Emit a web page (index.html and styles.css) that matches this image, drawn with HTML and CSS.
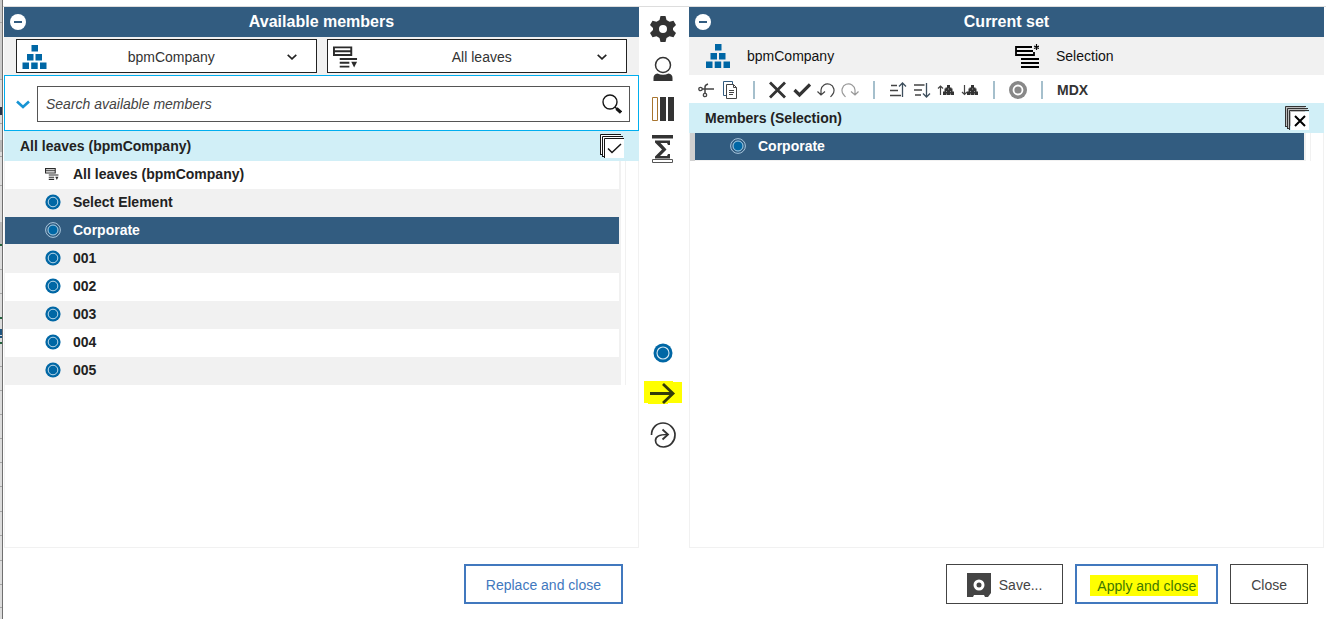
FILE: index.html
```html
<!DOCTYPE html>
<html lang="en">
<head>
    <meta charset="UTF-8">
    <meta name="viewport" content="width=device-width, initial-scale=1.0">
    <title>Set Editor</title>
    <link rel="stylesheet" href="styles.css">
</head>
<body>
    <!-- Shared icons -->
    <svg class="icon-defs" aria-hidden="true">
        <symbol id="icon-hierarchy" viewBox="0 0 24 24">
            <path fill="#0067a5" d="M9 0h6.500v6.500H9zM4.500 9H11v6.500H4.500zM13 9h6.500v6.500H13zM0 17.500h6.500V24H0zM8.700 17.500h6.500V24H8.700zM17.500 17.500H24V24h-6.500z"/>
        </symbol>
        <symbol id="icon-leaf" viewBox="0 0 20 20">
            <circle cx="10" cy="10" r="9.500" fill="#0067a5"/>
            <circle cx="10" cy="10" r="6" fill="none" stroke="#d5e8f3" stroke-width="1.100"/>
        </symbol>
        <symbol id="icon-leaf-selected" viewBox="0 0 16 16">
            <circle cx="8" cy="8" r="7.400" fill="none" stroke="#a9c6dc" stroke-width="1"/>
            <circle cx="8" cy="8" r="5.400" fill="#0067a5"/>
            <circle cx="8" cy="8" r="5" fill="none" stroke="#c3daea" stroke-width="0.900"/>
        </symbol>
        <symbol id="icon-subset" viewBox="0 0 26 24">
            <path fill="none" stroke="#2b2b2b" stroke-width="2" d="M1 2h18v8H1zM1 6h18M7 14h18M7 18h10M7 22h10"/>
            <path fill="#2b2b2b" d="M19 17h6l-3 6z"/>
        </symbol>
        <symbol id="icon-minus" viewBox="0 0 16 16">
            <circle cx="8" cy="8" r="8" fill="#fff"/>
            <path stroke="#325c80" stroke-width="2" d="M4 8h8"/>
        </symbol>
        <symbol id="icon-chevron" viewBox="0 0 10 6">
            <path fill="none" stroke="currentColor" stroke-width="1.600" d="M.7.8L5 4.800 9.300.8"/>
        </symbol>
        <symbol id="icon-pyramid" viewBox="0 0 11 10">
            <path fill="#333" d="M4 0h3v2.500h1.500v1h1v3H11V10H7.700V8.500h-.5V10H3.800V8.500h-.5V10H0V6.500h1.500v-3h1v-1H4z"/>
            <path fill="#999" d="M5 3.500h1v1H5zM3 6h1v1H3zM7 6h1v1H7z"/>
        </symbol>
    </svg>

    <!-- Worksheet edge behind the editor -->
    <svg class="sheet-edge" aria-hidden="true">
        <rect width="2" height="100%" fill="#dcdcdc"/>
        <path fill="#cbcbcb" d="M0 0h2v80H0z"/>
        <path fill="#b9b9b9" d="M0 222h2v23H0zM0 140h2v12H0z"/>
        <path stroke="#a6a6a6" d="M0 22.500h2M0 79.500h2M0 123.500h2M0 156.500h2M0 185.500h2M0 269.500h2M0 293.500h2M0 366.500h2M0 390.500h2M0 414.500h2M0 438.500h2M0 462.500h2M0 486.500h2M0 511.500h2M0 535.500h2M0 560.500h2M0 584.500h2M0 607.500h2"/>
        <path fill="#22633c" d="M0 244h3v2H0zM0 317h3v2H0zM0 342h3v2H0z"/>
        <path fill="#27364a" d="M0 107h2v8H0z"/>
        <path fill="#1f5580" d="M0 329h2v6H0zM0 336h3v2H0z"/>
        <path stroke="#707070" d="M2.500 0v2000"/>
    </svg>

    <main class="editor">
        <section class="panel">
            <header class="panel-title">
                <button class="collapse" aria-label="Collapse available members"><svg><use href="#icon-minus"/></svg></button>
                <h2>Available members</h2>
            </header>
            <div class="pickers">
                <div class="picker">
                    <svg class="picker-icon"><use href="#icon-hierarchy"/></svg>
                    <select aria-label="Hierarchy"><option>bpmCompany</option></select>
                    <svg class="picker-arrow"><use href="#icon-chevron"/></svg>
                </div>
                <div class="picker">
                    <svg class="picker-icon"><use href="#icon-subset"/></svg>
                    <select aria-label="Set"><option>All leaves</option></select>
                    <svg class="picker-arrow"><use href="#icon-chevron"/></svg>
                </div>
            </div>
            <div class="search">
                <button class="search-toggle" aria-label="Search options"><svg viewBox="0 0 14 9"><path fill="none" stroke="#1794d4" stroke-width="2.600" d="M1 1.500l6 5.500 6-5.500"/></svg></button>
                <div class="search-box">
                    <input type="text" placeholder="Search available members" aria-label="Search available members">
                    <button class="search-go" aria-label="Search">
                        <svg viewBox="0 0 20 20"><circle cx="8" cy="8" r="7" fill="none" stroke="#161616" stroke-width="1.400"/><path stroke="#161616" stroke-width="1.500" d="M13 13l2 2"/><path stroke="#161616" stroke-width="3.200" d="M14.500 14.500l4.500 4"/></svg>
                    </button>
                </div>
            </div>
            <div class="list-head">
                <h3>All leaves (bpmCompany)</h3>
                <button class="stack" aria-label="Select all">
                    <svg viewBox="0 0 24 24"><path fill="#fff" stroke="#161616" d="M.5 21V.5H21M2.500 23V2.500H23"/><path fill="none" stroke="#161616" d="M.5 20.500h2M2.500 22.500h2M4.500 24V4.500H24"/><path fill="#fff" d="M5 5h19v19H5z"/><path fill="none" stroke="#161616" stroke-width="1.500" d="M8 14.500l4 4 9-8.500"/></svg>
                </button>
            </div>
            <div class="list">
                <ul class="members">
                    <li><svg class="set-icon"><use href="#icon-subset"/></svg>All leaves (bpmCompany)</li>
                    <li><svg><use href="#icon-leaf"/></svg>Select Element</li>
                    <li class="selected"><svg><use href="#icon-leaf-selected"/></svg>Corporate</li>
                    <li><svg><use href="#icon-leaf"/></svg>001</li>
                    <li><svg><use href="#icon-leaf"/></svg>002</li>
                    <li><svg><use href="#icon-leaf"/></svg>003</li>
                    <li><svg><use href="#icon-leaf"/></svg>004</li>
                    <li><svg><use href="#icon-leaf"/></svg>005</li>
                </ul>
            </div>
        </section>

        <nav class="tools">
            <button aria-label="Settings">
                <svg viewBox="0 0 26 26"><path fill="#333" fill-rule="evenodd" d="M10.500 0h5l1 4 3 1.700 4-1 2.500 4.300-3 3v2l3 3-2.500 4.300-4-1-3 1.700-1 4h-5l-1-4-3-1.700-4 1L0 17l3-3v-2L0 9l2.500-4.300 4 1L9.500 4zM13 9a4 4 0 1 0 0 8 4 4 0 0 0 0-8z"/></svg>
            </button>
            <button aria-label="Aliases">
                <svg viewBox="0 0 26 26"><circle cx="13" cy="9" r="7.500" fill="none" stroke="#333" stroke-width="1.500"/><path fill="#333" d="M3.500 25v-3q0-4 4-4.500 5.500 2.500 11 0 4 .5 4 4.500v3z"/></svg>
            </button>
            <button aria-label="Attributes">
                <svg viewBox="0 0 26 26"><path fill="none" stroke="#a8752f" d="M2.500 1.500h5v23h-5z"/><path fill="#333" d="M10 1h6v24h-6zM18 1h6v24h-6z"/></svg>
            </button>
            <button aria-label="Totals">
                <svg class="totals" viewBox="0 0 26 28"><path fill="#333" d="M2 0h21v3.500H2zM5 5.500h15v4.500h-2l-1-2h-6.500l6 6.500-6.500 6.500H17l1-2h2v4.500H5v-2l7-7-7-7z"/><path fill="#fff" stroke="#555" d="M2.500 24.500h20v3h-20z"/></svg>
            </button>
            <div class="tools-move">
                <button aria-label="Leaf members"><svg class="leaf"><use href="#icon-leaf"/></svg></button>
                <button aria-label="Add to set">
                    <svg class="marked" viewBox="0 0 38 24"><path fill="#ff0" d="M0 0h29v1h9v21H24v1H4v-1H0z"/><path fill="none" stroke="#333b0a" stroke-width="2.800" d="M6 12.500h23M19 3l10 9.500L19 22"/></svg>
                </button>
                <button class="replace" aria-label="Replace set">
                    <svg viewBox="0 0 26 26"><path fill="none" stroke="#333" stroke-width="1.700" d="M1.500 13C1.500 6 6.500 1 13 1s12 5.500 12 12-5 12-11.500 12C8 25 5.500 21.500 5.500 18.500c0-4 4-6 11.500-6"/><path fill="none" stroke="#333" stroke-width="1.800" d="M12.500 7.500l5.500 5-5.500 5"/></svg>
                </button>
            </div>
        </nav>

        <section class="panel">
            <header class="panel-title">
                <button class="collapse" aria-label="Collapse current set"><svg><use href="#icon-minus"/></svg></button>
                <h2>Current set</h2>
            </header>
            <div class="set-info">
                <div><svg><use href="#icon-hierarchy"/></svg>bpmCompany</div>
                <div>
                    <svg viewBox="0 0 24 24"><path fill="none" stroke="#000" stroke-width="1.800" d="M17 3H1v8h18V8M1 7h17M6 15h18M6 19h18M6 23h18"/><path fill="none" stroke="#000" stroke-width="1.200" d="M21.500 0v6M19 2l5 2.500M24 2l-5 2.500"/></svg>Selection
                </div>
            </div>
            <div class="toolbar">
                <button aria-label="Cut"><svg viewBox="0 0 18 18"><path fill="none" stroke="#444" stroke-width="1.500" d="M5 8h12M8 13V6q0-2 3-3"/><circle cx="3.500" cy="8" r="1.700" fill="none" stroke="#444" stroke-width="1.300"/><circle cx="8" cy="14" r="1.700" fill="none" stroke="#444" stroke-width="1.300"/></svg></button>
                <button aria-label="Copy"><svg viewBox="0 0 18 18"><path fill="none" stroke="#325c80" d="M5 14.500H2.500V.5h9V3"/><path fill="#fff" stroke="#444" d="M5.500 3.500h7l3 3v11h-10z"/><path fill="none" stroke="#444" d="M12.500 3.500v3h3M8 9.500h5M8 11.500h5M8 13.500h4"/></svg></button>
                <span class="divider"></span>
                <button aria-label="Remove"><svg viewBox="0 0 18 18"><path stroke="#333" stroke-width="2.800" d="M1 1.500l15 15M16 1.500L1 16.500"/></svg></button>
                <button aria-label="Keep"><svg viewBox="0 0 18 18"><path fill="none" stroke="#333" stroke-width="3.200" d="M1.500 9l5 5L17 3.500"/></svg></button>
                <button aria-label="Undo"><svg viewBox="0 0 18 18"><path fill="none" stroke="#444" stroke-width="1.200" d="M4 14V9a6.500 6.500 0 1 1 11.500 4.500L13.500 16M.5 10.500L4 14l4-3.500"/></svg></button>
                <button aria-label="Redo"><svg viewBox="0 0 18 18"><path fill="none" stroke="#999" stroke-width="1.200" d="M14 14V9A6.500 6.500 0 1 0 2.500 13.500L4.500 16M10 10.500l4 3.500 3.500-3.500"/></svg></button>
                <span class="divider"></span>
                <button aria-label="Sort ascending"><svg viewBox="0 0 18 18"><path fill="none" stroke="#444" stroke-width="1.500" d="M2 4.500h6M1 9.500h8M1 14.500h11"/><path fill="none" stroke="#3d4e5c" stroke-width="1.300" d="M13.500 16V2M10 5.500L13.500 2 17 5.500"/></svg></button>
                <button aria-label="Sort descending"><svg viewBox="0 0 18 18"><path fill="none" stroke="#444" stroke-width="1.500" d="M1 4h10.500M1 9h8M2 14h6"/><path fill="none" stroke="#3d4e5c" stroke-width="1.300" d="M13.500 2v14M10 12.500l3.500 3.500 3.500-3.500"/></svg></button>
                <button aria-label="Sort hierarchy ascending"><svg viewBox="0 0 18 18"><path fill="none" stroke="#444" stroke-width="1.200" d="M3.500 14V5M1 7.500L3.500 5 6 7.500"/><use href="#icon-pyramid" x="6" y="4" width="11" height="10"/></svg></button>
                <button aria-label="Sort hierarchy descending"><svg viewBox="0 0 18 18"><path fill="none" stroke="#444" stroke-width="1.200" d="M3.500 4v9.500M1 11l2.500 2.500L6 11"/><use href="#icon-pyramid" x="6" y="4" width="11" height="10"/></svg></button>
                <span class="divider"></span>
                <button aria-label="Show totals"><svg viewBox="0 0 18 18"><circle cx="9" cy="9" r="9" fill="#888"/><circle cx="9" cy="9" r="4.500" fill="none" stroke="#fff" stroke-width="1.800"/></svg></button>
                <span class="divider"></span>
                <button class="mdx">MDX</button>
            </div>
            <div class="list-head">
                <h3>Members (Selection)</h3>
                <button class="stack" aria-label="Remove all">
                    <svg viewBox="0 0 24 24"><path fill="#bbb" stroke="#333" d="M.5 21V.5H21M2.500 23V2.500H23"/><path fill="none" stroke="#333" d="M.5 20.500h2M2.500 22.500h2M4.500 24V4.500H24"/><path fill="#fff" d="M6 6h18v18H6z"/><path fill="none" stroke="#000" stroke-width="2" d="M10 10l10 10M20 10L10 20"/></svg>
                </button>
            </div>
            <div class="list">
                <ul class="members current">
                    <li class="selected"><svg><use href="#icon-leaf-selected"/></svg>Corporate</li>
                </ul>
            </div>
        </section>

        <footer class="actions actions-left">
            <button class="btn btn-primary">Replace and close</button>
        </footer>
        <footer class="actions actions-right">
            <button class="btn">
                <svg viewBox="0 0 24 24"><path fill="#444" d="M0 0h24v20l-3 4h-3l-1-2H7l-1 2H0z"/><circle cx="12" cy="12" r="4" fill="#444" stroke="#fff" stroke-width="3"/></svg>Save...
            </button>
            <button class="btn btn-primary"><span class="marked-text">Apply and close</span></button>
            <button class="btn">Close</button>
        </footer>
    </main>
</body>
</html>
```

FILE: styles.css
```css
* {
    box-sizing: border-box;
}

body {
    display: flex;
    min-height: 100vh;
    margin: 0;
    background-color: #fff;
    color: #222;
    font-family: "Liberation Sans", Arial, sans-serif;
    font-size: 14px;
    line-height: 20px;
}

h2,
h3,
ul {
    margin: 0;
    padding: 0;
}

svg {
    display: block;
    flex: none;
}

button {
    padding: 0;
    border: none;
    background: none;
    color: inherit;
    font: inherit;
    cursor: pointer;
}

.icon-defs {
    position: absolute;
    width: 0;
    height: 0;
}

.sheet-edge {
    width: 3px;
    height: auto;
}

.editor {
    flex: 1;
    display: grid;
    grid-template-columns: 1fr 50px 1fr;
    grid-template-rows: 1fr auto;
    margin-top: 6px;
    padding: 0 2px 0 1px;
    border-top: 1px solid #ddd;
}

.panel {
    display: flex;
    flex-direction: column;
}

/* Title bars */
.panel-title {
    display: flex;
    align-items: center;
    height: 30px;
    padding: 0 6px;
    background-color: #325c80;
    color: #fff;
}

.panel-title h2 {
    flex: 1;
    padding-right: 16px;
    font-size: 16px;
    line-height: 30px;
    text-align: center;
}

.collapse svg {
    width: 16px;
    height: 16px;
}

/* Hierarchy and set drop-downs */
.pickers {
    display: flex;
    gap: 10px;
    padding: 2px 12px;
    background-color: #f1f1f1;
}

.picker {
    position: relative;
    flex: 1;
}

.picker select {
    display: block;
    width: 100%;
    height: 34px;
    padding: 2px 0 0 10px;
    border: 1px solid #222;
    border-radius: 0;
    background-color: #fff;
    appearance: none;
    color: #333;
    font: inherit;
    text-align-last: center;
}

.picker-icon {
    position: absolute;
    top: 6px;
    left: 6px;
    width: 25px;
    height: 24px;
}

.picker-arrow {
    position: absolute;
    top: 15px;
    right: 20px;
    width: 10px;
    height: 6px;
    pointer-events: none;
}

/* Search */
.search {
    display: flex;
    align-items: center;
    height: 56px;
    padding: 2px 8px 0 0;
    border: 1px solid #00aeef;
}

.search-toggle {
    display: flex;
    justify-content: center;
    width: 32px;
    padding-left: 4px;
}

.search-toggle svg {
    width: 14px;
    height: 9px;
}

.search-box {
    flex: 1;
    display: flex;
    align-items: center;
    height: 36px;
    padding: 0 7px 0 8px;
    border: 1px solid #555;
}

.search-box input {
    flex: 1;
    padding: 0;
    border: none;
    outline: none;
    font: inherit;
}

.search-box input::placeholder {
    color: #444;
    font-style: italic;
}

.search-go svg {
    width: 20px;
    height: 20px;
}

/* Member lists */
.list-head {
    display: flex;
    align-items: flex-start;
    justify-content: space-between;
    height: 30px;
    padding: 3px 15px 0 16px;
    background-color: #d1eff7;
}

.list-head h3 {
    line-height: 24px;
    font-size: 14px;
}

.stack svg {
    width: 24px;
    height: 24px;
}

.list {
    flex: 1;
    border: 1px solid #f1f1f1;
    border-top: none;
}

.members {
    margin-right: 12px;
    padding-right: 4px;
    border-right: 1px solid #f1f1f1;
    list-style: none;
    font-weight: bold;
}

.members li {
    display: flex;
    align-items: center;
    gap: 12px;
    height: 28px;
    padding-bottom: 2px;
    padding-left: 40px;
    border-right: 2px solid #f1f1f1;
}

.members li:nth-child(even) {
    background-color: #f1f1f1;
}

.members li.selected {
    border-bottom: 1px solid #f1f1f1;
    padding-bottom: 1px;
    background-color: #325c80;
    background-clip: padding-box;
    color: #fff;
}

.members svg {
    width: 16px;
    height: 16px;
}

.members .set-icon {
    width: 14px;
    height: 14px;
    margin-right: 2px;
}

.members.current {
    border-left: 5px solid #d0d0d0;
}

.members.current li {
    padding-left: 35px;
}

/* Middle tools */
.tools {
    display: flex;
    flex-direction: column;
    align-items: center;
    padding: 2px 2px 0 0;
}

.tools button {
    display: flex;
    align-items: center;
    justify-content: center;
    width: 40px;
    height: 40px;
}

.tools svg {
    width: 26px;
    height: 26px;
}

.tools .totals {
    height: 28px;
}

.tools .leaf {
    width: 20px;
    height: 20px;
}

.tools .marked {
    width: 38px;
    height: 24px;
}

.tools-move {
    margin-top: 164px;
}

.tools .replace {
    margin-top: 2px;
}

/* Current set */
.set-info {
    display: grid;
    grid-template-columns: 1fr 1fr;
    height: 38px;
    padding-right: 17px;
    background-color: #f1f1f1;
    color: #111;
}

.set-info div {
    display: flex;
    align-items: center;
    gap: 17px;
    padding-left: 17px;
}

.set-info svg {
    width: 24px;
    height: 24px;
}

.toolbar {
    display: flex;
    align-items: center;
    height: 28px;
    padding: 2px 0 0 5px;
}

.toolbar button {
    display: flex;
    align-items: center;
    justify-content: center;
    width: 24px;
    height: 24px;
}

.toolbar svg {
    width: 18px;
    height: 18px;
}

.toolbar .mdx {
    width: auto;
    padding-left: 3px;
    color: #333;
    font-weight: bold;
}

.divider {
    width: 2px;
    height: 18px;
    margin: 0 11px;
    background-color: #a5bfcc;
}

/* Bottom buttons */
.actions {
    display: flex;
    justify-content: flex-end;
    gap: 12px;
    padding: 16px 16px 15px;
}

.actions-right {
    grid-column: 3;
}

.btn {
    display: flex;
    align-items: center;
    gap: 8px;
    height: 40px;
    padding: 2px 20px 0;
    border: 1px solid #444;
    color: #444;
}

.btn svg {
    width: 24px;
    height: 24px;
}

.btn-primary {
    border: 2px solid #4178be;
    color: #4178be;
}

.marked-text {
    margin: 0 -2px 0 -7px;
    padding: 1px 2px 0 7px;
    background-color: #ff0;
    color: #417800;
}
```
